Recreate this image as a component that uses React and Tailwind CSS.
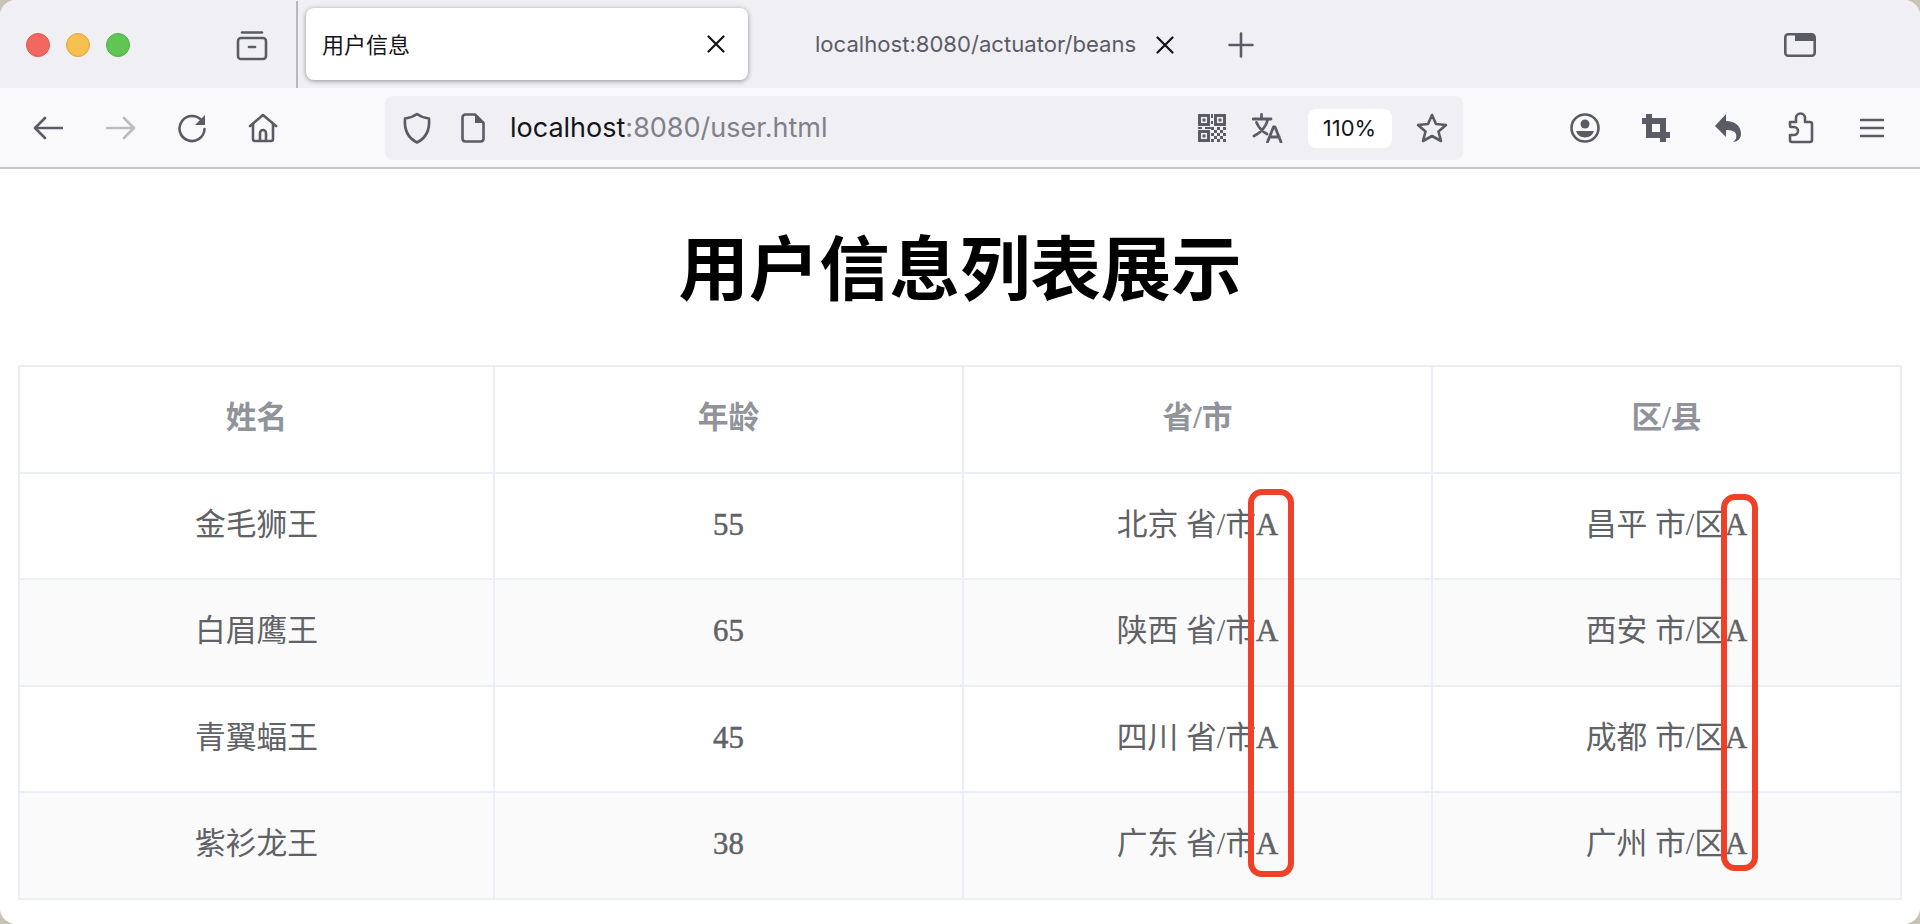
const I = ({ w, h = w, c = "", vb, children }) => (
  <svg width={w} height={h} viewBox={vb || `0 0 ${w} ${h}`} fill="none" className={`shrink-0 ${c}`}>{children}</svg>
);
const S = { stroke: "#5b5b66", strokeWidth: 2.6, strokeLinecap: "round", strokeLinejoin: "round" };
const rows = [
  ["金毛狮王", "55", "北京 省/市", "昌平 市/区"],
  ["白眉鹰王", "65", "陕西 省/市", "西安 市/区"],
  ["青翼蝠王", "45", "四川 省/市", "成都 市/区"],
  ["紫衫龙王", "38", "广东 省/市", "广州 市/区"],
];
const head = ["姓名", "年龄", "省/市", "区/县"];
const serif = "[font-family:'Liberation_Serif','Noto_Sans_CJK_SC',serif]";
const Heavy = ({ children }) => <span className="[-webkit-text-stroke:0.5px_#606266]">{children}</span>;

export default function App() {
  return (
    <div className="relative h-[924px] w-[1920px] overflow-hidden bg-[#c9c5b6]">
      <div className="flex h-[924px] flex-col overflow-hidden rounded-2xl bg-white">
        {/* tab strip */}
        <div className="flex h-[88px] shrink-0 items-center bg-[#f0f0f4] pt-px font-['Inter',sans-serif]">
          <div className="ml-[26px] flex gap-4">
            <div className="h-6 w-6 rounded-full border border-[#e0554e] bg-[#f2685f]" />
            <div className="h-6 w-6 rounded-full border border-[#dfa63e] bg-[#f7bf4f]" />
            <div className="h-6 w-6 rounded-full border border-[#52ae45] bg-[#61c554]" />
          </div>
          <I w={32} h={32} c="ml-[106px]">
            <path d="M6 3.5h20" {...S} />
            <rect x="2" y="9" width="28" height="21" rx="3" {...S} />
            <path d="M13 18h6" {...S} />
          </I>
          <div className="ml-[28px] -my-px h-[88px] w-0.5 bg-[#b9b9bd]" />
          <div className="-mt-px ml-2 flex h-[72px] w-[442px] items-center rounded-lg bg-white pl-4 pr-[23px] shadow-[0_1px_5px_rgba(0,0,0,0.4)]">
            <span className="flex-1 pt-[3px] text-[22px] text-[#15141a] font-['Inter','Noto_Sans_CJK_SC',sans-serif]">用户信息</span>
            <I w={18} h={18}><path d="M1.500 1.500l15 15M16.500 1.500l-15 15" stroke="#15141a" strokeWidth="2.200" strokeLinecap="round" /></I>
          </div>
          <span className="ml-[67px] text-[22.100px] whitespace-nowrap text-[#5b5b66]">localhost:8080/actuator/beans</span>
          <I w={18} h={18} c="ml-[20px]"><path d="M1.500 1.500l15 15M16.500 1.500l-15 15" stroke="#15141a" strokeWidth="2.200" strokeLinecap="round" /></I>
          <I w={26} h={26} c="ml-[54px]"><path d="M13 1.500v23M1.500 13h23" {...S} /></I>
          <I w={32} h={24} c="ml-[530px]">
            <rect x="1.300" y="1.300" width="29.400" height="21.400" rx="3" {...S} />
            <path d="M11 1.300h18a1.700 1.700 0 0 1 1.700 1.700v5H11z" fill="#5b5b66" />
          </I>
        </div>

        {/* toolbar */}
        <div className="flex h-[81px] shrink-0 items-center border-b-2 border-[#c8c8c8] bg-[#f9f9fb] pt-px font-['Inter',sans-serif]">
          <I w={30} h={24} c="ml-[33px]"><path d="M2 12h27M12 2L2 12l10 10" {...S} /></I>
          <I w={30} h={24} c="ml-[43px]"><path d="M1 12h27M18 2l10 10-10 10" {...S} stroke="#bcbcc0" /></I>
          <I w={30} h={30} c="ml-[41px]">
            <path d="M25 8A12.500 12.500 0 1 0 27.500 16" {...S} />
            <path d="M28 2v10H18z" fill="#5b5b66" />
          </I>
          <I w={30} h={30} c="ml-[41px]">
            <path d="M2 13L15 2l13 11M5 11v15a2 2 0 0 0 2 2h16a2 2 0 0 0 2-2V11M12 28v-8a3 3 0 0 1 6 0v8" {...S} />
          </I>
          <div className="ml-[107px] flex h-16 w-[1078px] items-center rounded-lg bg-[#f0f0f4]">
            <I w={30} h={32} c="ml-[17px]">
              <path d="M15 2C11 5 7 6 3 6.500 2 18 6 26 15 30.500 24 26 28 18 27 6.500 23 6 19 5 15 2z" {...S} />
            </I>
            <I w={24} h={30} c="ml-[29px]">
              <path d="M4 1.500h10l8.500 8.500v16a3 3 0 0 1-3 2.500H4.500a3 3 0 0 1-3-2.500V4a3 3 0 0 1 2.500-2.500z" {...S} />
              <path d="M14 1.500V10h8.500z" fill="#5b5b66" />
            </I>
            <span className="ml-[25px] text-[27px] whitespace-nowrap text-[#15141a]">
              localhost<span className="text-[#80808a]">:8080/user.html</span>
            </span>
            <I w={28} h={28} c="ml-[370px]">
              <path fill="#5b5b66" fillRule="evenodd" d="M0 0h12v12H0zM3 3v6h6V3zM16 0h12v12H16zM19 3v6h6V3zM0 16h12v12H0zM3 19v6h6v-6z" />
              <path fill="#5b5b66" d="M4.500 4.500h3v3h-3zM20.500 4.500h3v3h-3zM4.500 20.500h3v3h-3zM13 0h2v4h-2zM13 7h2v3h-2zM0 13h4v2H0zM7 13h6v2H7zM13 13h3v3h-3zM19 13h3v3h-3zM25 13h3v3h-3zM16 16h3v3h-3zM22 16h3v3h-3zM13 19h3v3h-3zM19 19h3v3h-3zM25 19h3v3h-3zM16 22h3v3h-3zM22 22h3v3h-3zM13 25h3v3h-3zM19 25h3v3h-3zM25 25h3v3h-3z" />
            </I>
            <I w={32} h={30} c="ml-[26px]">
              <path d="M1 6h18M9.500 1.500V6M16 6C14 14 8 20 2 23M4.500 9.500C7 15 11 19 15 21M15.500 29l6-15h1.500l6 15M17.800 24h9.500" {...S} strokeWidth="2.800" />
            </I>
            <div className="ml-6 flex h-[39px] w-[84px] items-center justify-center rounded-lg bg-white text-[22px] text-[#15141a]">110%</div>
            <I w={32} h={30} c="ml-6">
              <path d="M16 2l4 9 10 1-7.500 6.500L25 28l-9-5-9 5 2.500-9.500L2 12l10-1z" {...S} />
            </I>
          </div>
          <I w={30} h={30} c="ml-[107px]">
            <circle cx="15" cy="15" r="13.500" {...S} />
            <circle cx="15" cy="11" r="4.500" fill="#5b5b66" />
            <path d="M6 18h18a9.500 9.500 0 0 1-18 0z" fill="#5b5b66" />
          </I>
          <I w={28} h={28} c="ml-[42px]">
            <path fill="#5b5b66" fillRule="evenodd" d="M4 0h6v4h14v14h4v6h-4v4h-6v-4H4V10H0V4h4zM10 10v8h8v-8z" />
          </I>
          <I w={28} h={28} c="ml-[44px]">
            <path fill="#5b5b66" d="M12 0v7c9 0 15 5 15 13 0 4-3 8-8 8 3-2 4-5 3-8-1-3-5-4-10-4v7L1 12z" />
          </I>
          <I w={26} h={32} c="ml-[46px]">
            <path d="M2 10h6V6a4.500 4.500 0 0 1 9 0v4h5a2 2 0 0 1 2 2v16a2 2 0 0 1-2 2H4a2 2 0 0 1-2-2v-5h4a3.500 3.500 0 0 0 0-8H3a1 1 0 0 1-1-1z" {...S} />
          </I>
          <I w={24} h={20} c="ml-[46px]"><path d="M1 2h22M1 10h22M1 18h22" {...S} /></I>
        </div>

        {/* page */}
        <div className={`flex flex-1 flex-col items-center ${serif}`}>
          <h1 className="mt-[58px] text-[70.400px] leading-[88px] font-bold text-black">用户信息列表展示</h1>
          <table className="mt-[50px] w-[1882px] table-fixed border-collapse text-center text-[30.800px]">
            <colgroup>
              <col className="w-[475px]" /><col className="w-[469px]" /><col className="w-[469px]" /><col className="w-[469px]" />
            </colgroup>
            <thead>
              <tr className="h-[106.500px]">
                {head.map((t) => <th key={t} className="border-2 border-[#ebeef5] pb-0.5 font-bold text-[#909399]">{t}</th>)}
              </tr>
            </thead>
            <tbody>
              {rows.map((r, i) => (
                <tr key={r[0]} className={`h-[106.500px] ${i % 2 ? "bg-[#fafafa]" : ""}`}>
                  <td className="border-2 border-[#ebeef5] pb-0.5 text-[#606266]">{r[0]}</td>
                  <td className="border-2 border-[#ebeef5] pb-0.5 text-[#606266]"><Heavy>{r[1]}</Heavy></td>
                  <td className="border-2 border-[#ebeef5] pb-0.5 text-[#606266]">{r[2]}<Heavy>A</Heavy></td>
                  <td className="border-2 border-[#ebeef5] pb-0.5 text-[#606266]">{r[3]}<Heavy>A</Heavy></td>
                </tr>
              ))}
            </tbody>
          </table>
        </div>
      </div>
      <div className="absolute top-[489px] left-[1248px] h-[388px] w-[46px] rounded-[14px] border-[6px] border-[#ee4128]" />
      <div className="absolute top-[494px] left-[1721px] h-[377px] w-[37px] rounded-[14px] border-[6px] border-[#ee4128]" />
    </div>
  );
}
